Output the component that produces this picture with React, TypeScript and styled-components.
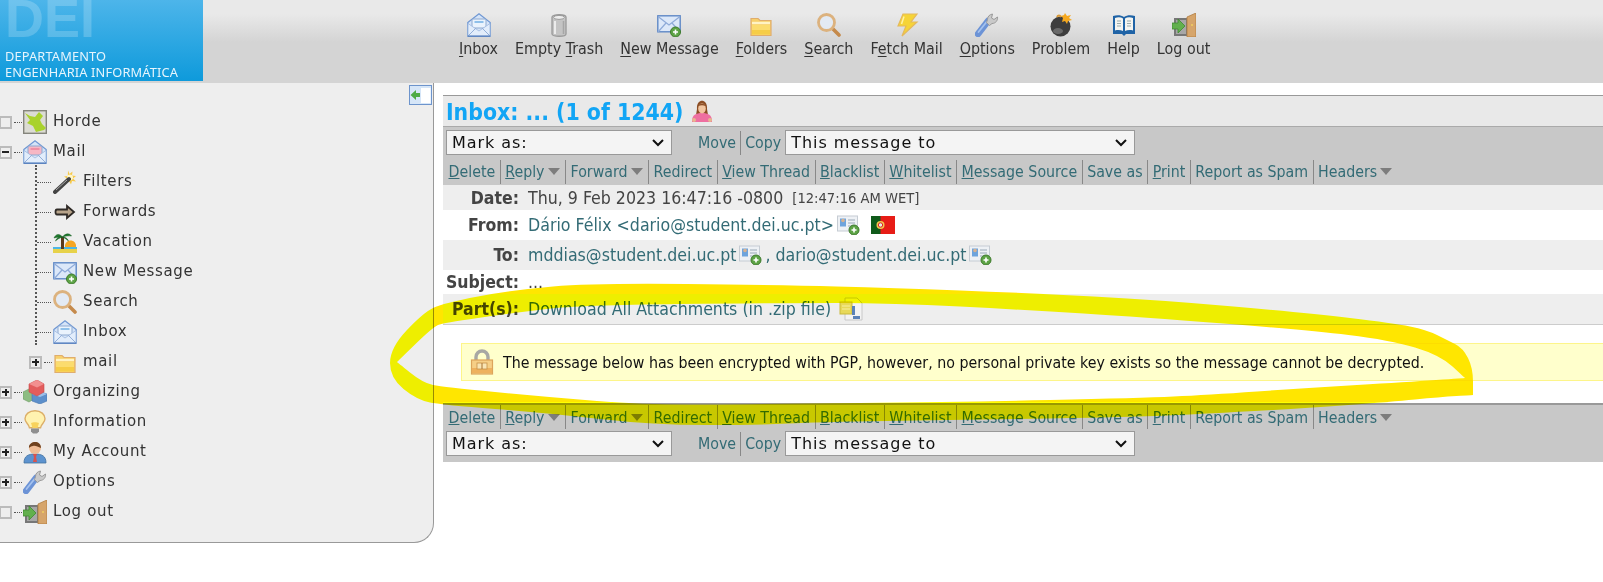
import React from "react";
import styled, { createGlobalStyle } from "styled-components";

const GlobalStyles = createGlobalStyle`
  html, body {
    margin: 0;
    padding: 0;
    background: #fff;
    overflow: hidden;
  }
  * {
    box-sizing: border-box;
  }
`;

const tahoma = `"DejaVu Sans Condensed", "DejaVu Sans", sans-serif`;
const verdana = `"DejaVu Sans", sans-serif`;

type IconProps = { size?: number };

const Svg = styled.svg`
  display: block;
  flex: none;
`;

const Plus = ({ x, y }: { x: number; y: number }) => (
  <g>
    <circle cx={x} cy={y} r="5" fill="#5da345" stroke="#3d7a2c" strokeWidth="1" />
    <path d={`M${x - 2.5} ${y}h5M${x} ${y - 2.5}v5`} stroke="#fff" strokeWidth="1.6" />
  </g>
);

const OpenMail = ({ size = 24, paper = "#eaf3fd", line = "#8fc0ea" }: IconProps & { paper?: string; line?: string }) => (
  <Svg width={size} height={size} viewBox="0 0 24 24">
    <path d="M.8 9.5 12 .8l11.2 8.7v13.7H.8z" fill="#d5e4f8" stroke="#6f97d3" strokeWidth="1.2" />
    <rect x="5" y="6" width="14" height="9" rx="1" fill={paper} stroke="#8ea9cf" />
    <path d="M7.5 9h9" stroke={line} strokeWidth="2" />
    <path d="M1 10.5 12 18l11-7.5V23H1z" fill="#e2edfb" stroke="#9db8de" strokeWidth=".8" />
    <path d="M1 23l8-8M23 23l-8-8" stroke="#93afd8" strokeWidth="1" />
    <path d="M.8 23.2h22.4" stroke="#5b83c0" strokeWidth="1.4" />
  </Svg>
);

const Trash = ({ size = 24 }: IconProps) => (
  <Svg width={size} height={size} viewBox="0 0 24 24">
    <path d="M5 4c0-3 14-3 14 0v17c0 3-14 3-14 0z" fill="#c4c4c4" stroke="#999" strokeWidth="1.3" />
    <ellipse cx="12" cy="4.4" rx="5.4" ry="2" fill="#eee" stroke="#999" />
    <path d="M8 8v13" stroke="#ececec" strokeWidth="2" />
    <path d="M16.5 8v13" stroke="#a6a6a6" strokeWidth="1.5" />
  </Svg>
);

const NewMail = ({ size = 24 }: IconProps) => (
  <Svg width={size} height={size} viewBox="0 0 24 24">
    <rect x=".8" y="2.8" width="22.4" height="16" fill="#dce8f9" stroke="#5f88c6" strokeWidth="1.4" />
    <path d="M1 3.5 12 12 23 3.5M1 19l8-9M23 19l-8-9" fill="none" stroke="#8eaad8" strokeWidth="1.2" />
    <Plus x={18.5} y={19} />
  </Svg>
);

const Folder = ({ size = 24 }: IconProps) => (
  <Svg width={size} height={size} viewBox="0 0 24 24">
    <path d="M2 5.5h7l2 2h11v15H2z" fill="#f7d06c" stroke="#e0ad6c" strokeWidth="1.2" />
    <path d="M3 10h18" stroke="#fff3c4" strokeWidth="2.4" />
    <path d="M3 12h18v9.5H3z" fill="#fbdc6e" />
    <path d="M3 17h18v4.5H3z" fill="#f6cd47" />
  </Svg>
);

const Search = ({ size = 24 }: IconProps) => (
  <Svg width={size} height={size} viewBox="0 0 24 24">
    <path d="m15 15 7 7" stroke="#c58a4c" strokeWidth="3.6" strokeLinecap="round" />
    <circle cx="9.5" cy="9.5" r="8" fill="#e3eaf3" stroke="#dcb27e" strokeWidth="2.8" />
  </Svg>
);

const Bolt = ({ size = 24 }: IconProps) => (
  <Svg width={size} height={size} viewBox="0 0 24 24">
    <path d="M8 1h14l-6 8h6L7 23l4-10H3z" fill="#f6d437" stroke="#e4b95c" strokeWidth="1.2" />
    <path d="M9 3.5 6.5 11" stroke="#fff2a8" strokeWidth="1.5" />
  </Svg>
);

const Wrench = ({ size = 24 }: IconProps) => (
  <Svg width={size} height={size} viewBox="0 0 24 24">
    <path d="m3 21 10-13" stroke="#6c93d6" strokeWidth="6.5" strokeLinecap="round" />
    <path d="m3.5 19 8-10" stroke="#a5c2ee" strokeWidth="1.8" strokeLinecap="round" />
    <path d="M12.5 6.5c0-3 2-5 5-5.5l-1 4 2.5 1.5 3.5-2.5c.5 3.5-2 6.5-5.5 6.5l-2.500 2-3-3z" fill="#c9c9c9" stroke="#999" />
  </Svg>
);

const Bomb = ({ size = 24 }: IconProps) => (
  <Svg width={size} height={size} viewBox="0 0 24 24">
    <circle cx="11.5" cy="13.5" r="10" fill="#3d3d3d" />
    <ellipse cx="9" cy="18" rx="5" ry="3" fill="#6a6a6a" />
    <path d="M8 4c1-2 3-2 4 0" fill="none" stroke="#d99a38" strokeWidth="2" />
    <path d="m16 0 2 3 4-1-2 3 3 2-4 1-1 3-2-3-3 1 1-4-2-2 3-1z" fill="#f5a81f" />
  </Svg>
);

const Book = ({ size = 24 }: IconProps) => (
  <Svg width={size} height={size} viewBox="0 0 24 24">
    <path d="M1 3c4-1 8-1 11 1 3-2 7-2 11-1v18H14l-2 2-2-2H1z" fill="#1f63a6" />
    <path d="M3 5c3-1 6-.8 8 .5V18c-2-1-5-1.2-8-.6zM21 5c-3-1-6-.8-8 .5V18c2-1 5-1.2 8-.6z" fill="#f4f4f0" />
    <path d="M5 8h4M5 10.5h4M5 13h4M15 8h4M15 10.5h4M15 13h4" stroke="#9aa" strokeWidth="1" />
  </Svg>
);

const Door = ({ size = 24 }: IconProps) => (
  <Svg width={size} height={size} viewBox="0 0 24 24">
    <path d="M2 5h14v18H2z" fill="#777" />
    <path d="M4 7h10v14H4z" fill="#a7a7a7" />
    <path d="M15 4 24 0v24h-9z" fill="#d6a56b" stroke="#b07c40" strokeWidth=".8" />
    <circle cx="20" cy="12" r="1" fill="#f0d060" />
    <path d="M0 10h6V6l7 7-7 7v-4H0z" fill="#62b04d" stroke="#3f8a30" strokeWidth=".8" />
  </Svg>
);

const Wand = ({ size = 24 }: IconProps) => (
  <Svg width={size} height={size} viewBox="0 0 24 24">
    <path d="M15 .5l1.5 3.5 3-2.5-.5 4 4 .5-3 2.5 3 3-4-.5-1 3.5-2-3.5-3.5 1 1.5-3.5-3-2 3.8-.5z" fill="#f7c948" />
    <circle cx="17" cy="7.5" r="3" fill="#fff6c8" />
    <path d="m2 22 14-13" stroke="#444" strokeWidth="4" strokeLinecap="round" />
    <path d="m3 20 11-10" stroke="#aaa" strokeWidth="1" />
  </Svg>
);

const ForwardArrow = ({ size = 24 }: IconProps) => (
  <Svg width={size} height={size} viewBox="0 0 24 24">
    <path d="M4 9.5h10V6l7 6-7 6v-3.5H4c-2 0-2-5 0-5z" fill="#b8a48b" stroke="#2f2a26" strokeWidth="1.8" />
  </Svg>
);

const Palm = ({ size = 24 }: IconProps) => (
  <Svg width={size} height={size} viewBox="0 0 24 24">
    <path d="M12 15a5.5 5.5 0 0 1 11 2H12z" fill="#f5a623" />
    <path d="M0 17h24v2H0z" fill="#4cb6e6" />
    <path d="M0 19h24v4H0z" fill="#e7d24a" />
    <path d="M8 7h3v12H8z" fill="#5a3b1e" />
    <path d="M9.5 7C6 3 3 4 1 8c3-1 5-1 8.5-1zM9.5 7c3-4 7-4 9-1-3-.5-6 0-9 1zM9.5 7c-4-.5-6 1-7 4 2-2 4-3 7-4zM9.5 7c3 0 5 1.5 6 4-2-2-4-3-6-4z" fill="#1f7a2e" stroke="#135a1e" strokeWidth=".5" />
  </Svg>
);

const HordeLogo = ({ size = 24 }: IconProps) => (
  <Svg width={size} height={size} viewBox="0 0 24 24">
    <rect x=".7" y=".7" width="22.6" height="22.6" fill="#dcdcd4" stroke="#85857c" strokeWidth="1.4" />
    <path d="M2 3l5 3 5 1 4-5 4 4-3 4 2 4 4 4-2 2-8 2-3-6-6-3 3-3z" fill="#a9d22c" />
  </Svg>
);

const Blocks = ({ size = 24 }: IconProps) => (
  <Svg width={size} height={size} viewBox="0 0 24 24">
    <path d="M0 12l6-3 5 3v7l-5 3-6-3z" fill="#8dbd82" stroke="#6d9a64" strokeWidth=".6" />
    <path d="M9 14l7-3 8 3v7l-7 3-8-3z" fill="#5c8fcb" stroke="#4a78b0" strokeWidth=".6" />
    <path d="M9 14l8 3 7-3-8-3z" fill="#9cc0e8" />
    <path d="M6 4l8-4 7 4v8l-7 4-8-4z" fill="#e25c5c" stroke="#c94a4a" strokeWidth=".6" />
    <path d="M6 4l8 3.5L21 4l-7-4z" fill="#f28f8f" />
  </Svg>
);

const Bulb = ({ size = 24 }: IconProps) => (
  <Svg width={size} height={size} viewBox="0 0 24 24">
    <path d="M12 .8c6 0 10 3.6 10 8 0 4-4 5-4.5 9h-11C6 13.8 2 12.8 2 8.800c0-4.4 4-8 10-8z" fill="#fff2b0" stroke="#dcae67" strokeWidth="1.4" />
    <path d="M8 13c2-1 6-1 8 0l-1.5 5h-5z" fill="#f8d25c" />
    <path d="M8 18.5h8v3l-2 2h-4l-2-2z" fill="#8f8f8f" />
  </Svg>
);

const Person = ({ size = 24 }: IconProps) => (
  <Svg width={size} height={size} viewBox="0 0 24 24">
    <path d="M1 23c0-7 4-9 11-9s11 2 11 9z" fill="#5d93cf" stroke="#41719f" strokeWidth=".8" />
    <path d="M10 14h4l-1 3 1 5h-4l1-5z" fill="#d9534f" />
    <circle cx="12" cy="8" r="6" fill="#f0bc95" />
    <path d="M6 8c-1-7 12-9 12 0-3-1-6-3-8-2-2 0-3 1-4 2z" fill="#70421f" />
  </Svg>
);

const Collapse = () => (
  <Svg width={23} height={20} viewBox="0 0 23 20">
    <rect x=".5" y=".5" width="22" height="19" fill="#d6e6f8" stroke="#6d94cc" />
    <rect x="12" y="3" width="9.5" height="15" fill="#fff" />
    <path d="M1.5 10 7 5v3h4v4H7v3z" fill="#4dab45" />
  </Svg>
);

const Contact = () => (
  <Svg width={23} height={20} viewBox="0 0 23 20">
    <rect x=".5" y="1" width="20" height="15" fill="#eef1f5" stroke="#c6ccd3" />
    <rect x="3" y="3.5" width="6" height="8" fill="#6fa4dc" />
    <circle cx="6" cy="5.5" r="1.8" fill="#d9b28f" />
    <path d="M11 5h7M11 8h7M11 11h5" stroke="#9aa9b8" strokeWidth="1.2" />
    <Plus x={17} y={15} />
  </Svg>
);

const FlagMark = styled(Svg)`
  margin-left: 8px;
`;

const Flag = () => (
  <FlagMark width={24} height={18} viewBox="0 0 24 18">
    <rect x="0" y="0" width="24" height="18" fill="#e71c16" />
    <rect x="0" y="0" width="9.5" height="18" fill="#0f5a1a" />
    <circle cx="9.5" cy="9" r="4" fill="#f2c94c" />
    <circle cx="9.5" cy="9" r="2.2" fill="#e8e8e8" stroke="#d22" />
  </FlagMark>
);

const ZipDoc = () => (
  <Svg width={24} height={24} viewBox="0 0 24 24">
    <path d="M6 1h12l5 5v17H6z" fill="#f3f3f3" stroke="#c8c8c8" />
    <rect x="1" y="5" width="12" height="12" fill="#e8d95a" stroke="#c9b93f" />
    <path d="M3 9h8M3 12h8" stroke="#f7f0a0" strokeWidth="1.2" />
    <path d="M13 9h3v9h-3zM14 19h7v3h-7z" fill="#5b82b8" />
  </Svg>
);

const Lock = () => (
  <Svg width={24} height={26} viewBox="0 0 24 26">
    <path d="M6 12V8a6 6 0 0 1 12 0v4" fill="none" stroke="#a8a8a4" strokeWidth="3.4" />
    <rect x="1.5" y="11" width="21" height="14" fill="#f6cf86" stroke="#dca45b" strokeWidth="1.2" />
    <path d="M2 19h20v5H2z" fill="#eeb15e" />
    <rect x="7" y="14" width="10" height="6" fill="#f9e5b4" stroke="#c69146" strokeWidth=".8" />
    <path d="M12 14v6" stroke="#a87330" />
  </Svg>
);

const Woman = () => (
  <Svg width={22} height={23} viewBox="0 0 22 23">
    <path d="M6 9c-1-11 11-11 10 0l1 6H5z" fill="#8c4e25" />
    <path d="M1 21c0-6 4-8 10-8s10 2 10 8v1H1z" fill="#ee6fa0" />
    <circle cx="3" cy="20" r="2" fill="#e8b68f" />
    <circle cx="19" cy="20" r="2" fill="#e8b68f" />
    <ellipse cx="11" cy="8.5" rx="3.8" ry="5" fill="#f2c6a0" />
    <path d="M7 6c2-3 6-3 8 0-3-1-5-1-8 0z" fill="#8c4e25" />
  </Svg>
);

const Page = styled.div`
  position: relative;
  width: 1603px;
  height: 582px;
  overflow: hidden;
  font-family: ${tahoma};
`;

const Header = styled.header`
  display: flex;
  height: 83px;
  background: linear-gradient(#e9e9e9 0, #e9e9e9 14px, #d4d4d4 42px, #d4d4d4 100%);
`;

const Logo = styled.div`
  width: 203px;
  height: 81px;
  overflow: hidden;
  padding-left: 5px;
  background: linear-gradient(#4db5ea, #0e9adb);
  color: #e6f5fd;
  font-family: "Noto Sans", sans-serif;
  flex: none;
`;

const LogoMark = styled.div`
  height: 56px;
  margin-top: -7px;
  font: bold 54px/50px "Liberation Sans", sans-serif;
  color: rgba(255, 255, 255, 0.2);
`;

const LogoLine = styled.div`
  font-size: 12.8px;
  line-height: 15.5px;
  letter-spacing: 0.15px;
  white-space: nowrap;
`;

const IconBar = styled.nav`
  display: flex;
  gap: 17px;
  margin-left: 256px;
  padding-top: 13px;
`;

const IconButton = styled.a`
  display: flex;
  flex-direction: column;
  align-items: center;
  font-size: 15.9px;
  line-height: 21px;
  color: #333;
  white-space: nowrap;
  span {
    margin-top: 1px;
  }
  u {
    text-underline-offset: 2px;
  }
`;

const Body = styled.div`
  display: flex;
  align-items: flex-start;
`;

const Sidebar = styled.aside`
  width: 434px;
  height: 460px;
  flex: none;
  overflow: hidden;
  background: #eee;
  border-right: 1px solid #999;
  border-bottom: 1px solid #999;
  border-bottom-right-radius: 20px;
  font-family: ${verdana};
  font-size: 15px;
  letter-spacing: 0.65px;
  color: #333;
`;

const SidebarTop = styled.div`
  display: flex;
  justify-content: flex-end;
  height: 22px;
  padding: 2px 1px 0 0;
`;

const TreeRow = styled.div<{ $indent?: number }>`
  display: flex;
  align-items: center;
  height: 30px;
  padding-left: ${(p) => p.$indent ?? 0}px;
  white-space: nowrap;
`;

const Expander = styled.span<{ $mark?: "plus" | "minus" }>`
  position: relative;
  display: block;
  flex: none;
  width: 13px;
  height: 13px;
  margin: 4px 0 0 -1px;
  background: #eee;
  border: 2px solid #bbb;
  &::before {
    content: "";
    display: ${(p) => (p.$mark ? "block" : "none")};
    position: absolute;
    left: 1px;
    top: 3px;
    width: 7px;
    height: 2px;
    background: #222;
  }
  &::after {
    content: "";
    display: ${(p) => (p.$mark === "plus" ? "block" : "none")};
    position: absolute;
    left: 3.5px;
    top: 1px;
    width: 2px;
    height: 7px;
    background: #222;
  }
`;

const Stem = styled.span`
  flex: none;
  width: 8px;
  margin: 4px 1px 0 2px;
  border-top: 1px dotted #555;
`;

const TreeIcon = styled.span`
  display: flex;
  flex: none;
  width: 24px;
  height: 24px;
  margin-top: 4px;
`;

const TreeLabel = styled.span`
  margin-left: 6px;
  margin-top: 1px;
`;

const Leaves = styled.div`
  margin-left: 35px;
  border-left: 2px dotted #555;
`;

const LeafStem = styled.span`
  flex: none;
  width: 14px;
  margin: 4px 2px 0 0;
  border-top: 1px dotted #555;
`;

const Main = styled.main`
  flex: 1;
  min-width: 0;
  margin-left: 9px;
  padding-top: 12px;
`;

const TitleBar = styled.div`
  display: flex;
  align-items: center;
  gap: 8px;
  height: 31px;
  padding: 1px 0 0 3px;
  background: #e9e9e9;
  border-top: 1px solid #999;
`;

const Title = styled.h1`
  margin: 0;
  font-size: 22.8px;
  line-height: 30px;
  font-weight: bold;
  color: #12a5f5;
`;

const Actions = styled.div`
  background: #c8c8c8;
`;

const SelectRow = styled.div<{ $top?: boolean }>`
  display: flex;
  align-items: center;
  height: ${(p) => (p.$top ? 32 : 33)}px;
  padding: 0 0 ${(p) => (p.$top ? 0 : 4)}px 3px;
  border-top: ${(p) => (p.$top ? "1px solid #aaa" : "0")};
`;

const chevron =
  "data:image/svg+xml,%3Csvg xmlns='http://www.w3.org/2000/svg' width='12' height='8'%3E%3Cpath d='M1 1l5 5 5-5' fill='none' stroke='%23111' stroke-width='2'/%3E%3C/svg%3E";

const Picker = styled.select<{ $width: number }>`
  appearance: none;
  width: ${(p) => p.$width}px;
  height: 25px;
  padding-left: 5px;
  font-family: ${verdana};
  font-size: 16px;
  letter-spacing: 0.95px;
  color: #111;
  background: #f4f4f4 url("${chevron}") no-repeat right 7px center;
  border: 1px solid #999;
  border-radius: 0;
`;

const SideAction = styled.a<{ $divided?: boolean; $first?: boolean }>`
  display: flex;
  align-items: center;
  height: 24px;
  margin-left: ${(p) => (p.$first ? 22 : 0)}px;
  padding: 0 4px;
  font-size: 15.8px;
  color: #336b75;
  border-left: ${(p) => (p.$divided ? "1px solid #888" : "0")};
`;

const NavRow = styled.div<{ $ruled?: boolean }>`
  display: flex;
  align-items: center;
  height: ${(p) => (p.$ruled ? 26 : 27)}px;
  padding-left: 1px;
  border-top: ${(p) => (p.$ruled ? "2px solid #999" : "0")};
`;

const NavLink = styled.a<{ $divided?: boolean }>`
  display: flex;
  align-items: center;
  height: 24px;
  padding: 0 4.5px;
  font-size: 15.8px;
  color: #336b75;
  white-space: nowrap;
  border-left: ${(p) => (p.$divided ? "1px solid #888" : "0")};
`;

const Caret = styled.span`
  width: 0;
  height: 0;
  margin: 0 1px 0 3px;
  border-style: solid;
  border-width: 7px 6.5px 0;
  border-color: #7d7d7d transparent transparent;
`;

const MetaRow = styled.div<{ $height: number; $shaded?: boolean; $ruled?: boolean }>`
  display: flex;
  align-items: center;
  height: ${(p) => p.$height}px;
  background: ${(p) => (p.$shaded ? "#eee" : "#fff")};
  border-bottom: ${(p) => (p.$ruled ? "1px solid #ccc" : "0")};
`;

const MetaLabel = styled.span`
  flex: none;
  width: 76px;
  margin-right: 9px;
  text-align: right;
  font-size: 17.5px;
  font-weight: bold;
  color: #444;
  white-space: nowrap;
  direction: rtl;
  unicode-bidi: plaintext;
`;

const MetaValue = styled.span<{ $link?: boolean }>`
  display: flex;
  align-items: center;
  gap: 3px;
  font-size: 17.6px;
  color: ${(p) => (p.$link ? "#336b75" : "#444")};
  white-space: pre;
`;

const Stamp = styled.span`
  margin-left: 1px;
  font-size: 14.6px;
`;

const Notice = styled.div`
  display: flex;
  align-items: center;
  gap: 9px;
  height: 38px;
  margin: 18px -20px 22px 18px;
  padding-left: 8px;
  background: #ffc;
  border: 1px solid #fdf58a;
  font-size: 15.8px;
  color: #111;
  white-space: nowrap;
`;

const Marker = styled.svg`
  position: absolute;
  left: 0;
  top: 0;
  pointer-events: none;
  mix-blend-mode: multiply;
`;

const toolbar: { icon: React.ReactNode; label: React.ReactNode }[] = [
  { icon: <OpenMail />, label: <><u>I</u>nbox</> },
  { icon: <Trash />, label: <>Empty <u>T</u>rash</> },
  { icon: <NewMail />, label: <><u>N</u>ew Message</> },
  { icon: <Folder />, label: <><u>F</u>olders</> },
  { icon: <Search />, label: <><u>S</u>earch</> },
  { icon: <Bolt />, label: <>F<u>e</u>tch Mail</> },
  { icon: <Wrench />, label: <><u>O</u>ptions</> },
  { icon: <Bomb />, label: <>Problem</> },
  { icon: <Book />, label: <>Help</> },
  { icon: <Door />, label: <>Log out</> },
];

const leaves: { icon: React.ReactNode; label: string }[] = [
  { icon: <Wand />, label: "Filters" },
  { icon: <ForwardArrow />, label: "Forwards" },
  { icon: <Palm />, label: "Vacation" },
  { icon: <NewMail />, label: "New Message" },
  { icon: <Search />, label: "Search" },
  { icon: <OpenMail />, label: "Inbox" },
];

const lowerTree: { icon: React.ReactNode; label: string; mark?: "plus" }[] = [
  { icon: <Blocks />, label: "Organizing", mark: "plus" },
  { icon: <Bulb />, label: "Information", mark: "plus" },
  { icon: <Person />, label: "My Account", mark: "plus" },
  { icon: <Wrench />, label: "Options", mark: "plus" },
  { icon: <Door />, label: "Log out" },
];

const messageLinks: { label: React.ReactNode; caret?: boolean }[] = [
  { label: <><u>D</u>elete</> },
  { label: <><u>R</u>eply</>, caret: true },
  { label: <>Forward</>, caret: true },
  { label: <>Redirect</> },
  { label: <><u>V</u>iew Thread</> },
  { label: <><u>B</u>lacklist</> },
  { label: <><u>W</u>hitelist</> },
  { label: <><u>M</u>essage Source</> },
  { label: <>Save as</> },
  { label: <><u>P</u>rint</> },
  { label: <>Report as Spam</> },
  { label: <>Headers</>, caret: true },
];

type Pt = [number, number];

// outer edge of the hand drawn ring (tips listed twice to stay sharp)
const ringOuter: Pt[] = [
  [593, 283], [780, 285], [893, 288], [1027, 293], [1160, 300], [1307, 313], [1393, 323], [1427, 330],
  [1447, 340], [1463, 348], [1473, 368], [1473, 395], [1473, 395], [1440, 397], [1390, 402], [1307, 408],
  [1240, 412], [1140, 417], [957, 420], [817, 422], [760, 425], [653, 425], [547, 413], [443, 405],
  [417, 400], [390, 378], [390, 348], [423, 313], [443, 303], [513, 290],
];
const ringInner: Pt[] = [
  [580, 305], [780, 303], [893, 303], [1027, 310], [1140, 317], [1307, 330], [1390, 340], [1440, 355],
  [1465, 378], [1465, 378], [1407, 382], [1307, 388], [1207, 395], [1140, 398], [960, 402], [760, 404],
  [647, 405], [547, 397], [443, 387], [423, 383], [397, 362], [397, 362], [433, 327], [443, 323], [513, 313],
];

// closed curve running through the midpoints of the outline
const smooth = (pts: Pt[]) => {
  const mid = (a: Pt, b: Pt) => `${(a[0] + b[0]) / 2} ${(a[1] + b[1]) / 2}`;
  let d = `M${mid(pts[pts.length - 1], pts[0])}`;
  pts.forEach((p, i) => {
    d += `Q${p[0]} ${p[1]} ${mid(p, pts[(i + 1) % pts.length])}`;
  });
  return d + "Z";
};

const ringPath = `${smooth(ringOuter)} ${smooth(ringInner)}`;

function ActionStrip() {
  return (
    <>
      {messageLinks.map((item, i) => (
        <NavLink key={i} $divided={i > 0}>
          <span>{item.label}</span>
          {item.caret && <Caret />}
        </NavLink>
      ))}
    </>
  );
}

const MovePickers = () => (
  <>
    <Picker $width={226} defaultValue="mark">
      <option value="mark">Mark as:</option>
    </Picker>
    <SideAction $first>Move</SideAction>
    <SideAction $divided>Copy</SideAction>
    <Picker $width={350} defaultValue="to">
      <option value="to">This message to</option>
    </Picker>
  </>
);

export default function App() {
  return (
    <Page>
      <GlobalStyles />
      <Header>
        <Logo>
          <LogoMark>DEI</LogoMark>
          <LogoLine>DEPARTAMENTO</LogoLine>
          <LogoLine>ENGENHARIA INFORMÁTICA</LogoLine>
        </Logo>
        <IconBar>
          {toolbar.map((item, i) => (
            <IconButton key={i}>
              {item.icon}
              <span>{item.label}</span>
            </IconButton>
          ))}
        </IconBar>
      </Header>
      <Body>
        <Sidebar>
          <SidebarTop>
            <Collapse />
          </SidebarTop>
          <TreeRow>
            <Expander />
            <Stem />
            <TreeIcon><HordeLogo /></TreeIcon>
            <TreeLabel>Horde</TreeLabel>
          </TreeRow>
          <TreeRow>
            <Expander $mark="minus" />
            <Stem />
            <TreeIcon><OpenMail paper="#f6b7c4" line="#ee8fa5" /></TreeIcon>
            <TreeLabel>Mail</TreeLabel>
          </TreeRow>
          <Leaves>
            {leaves.map((leaf) => (
              <TreeRow key={leaf.label}>
                <LeafStem />
                <TreeIcon>{leaf.icon}</TreeIcon>
                <TreeLabel>{leaf.label}</TreeLabel>
              </TreeRow>
            ))}
          </Leaves>
          <TreeRow $indent={30}>
            <Expander $mark="plus" />
            <Stem />
            <TreeIcon><Folder /></TreeIcon>
            <TreeLabel>mail</TreeLabel>
          </TreeRow>
          {lowerTree.map((node) => (
            <TreeRow key={node.label}>
              <Expander $mark={node.mark} />
              <Stem />
              <TreeIcon>{node.icon}</TreeIcon>
              <TreeLabel>{node.label}</TreeLabel>
            </TreeRow>
          ))}
        </Sidebar>
        <Main>
          <TitleBar>
            <Title>Inbox: ... (1 of 1244)</Title>
            <Woman />
          </TitleBar>
          <Actions>
            <SelectRow $top><MovePickers /></SelectRow>
            <NavRow><ActionStrip /></NavRow>
          </Actions>
          <MetaRow $height={25} $shaded>
            <MetaLabel>Date:</MetaLabel>
            <MetaValue>Thu, 9 Feb 2023 16:47:16 -0800 <Stamp>[12:47:16 AM WET]</Stamp></MetaValue>
          </MetaRow>
          <MetaRow $height={30}>
            <MetaLabel>From:</MetaLabel>
            <MetaValue $link>Dário Félix &lt;dario@student.dei.uc.pt&gt;<Contact /><Flag /></MetaValue>
          </MetaRow>
          <MetaRow $height={30} $shaded>
            <MetaLabel>To:</MetaLabel>
            <MetaValue $link>mddias@student.dei.uc.pt<Contact />, dario@student.dei.uc.pt<Contact /></MetaValue>
          </MetaRow>
          <MetaRow $height={24}>
            <MetaLabel>Subject:</MetaLabel>
            <MetaValue>...</MetaValue>
          </MetaRow>
          <MetaRow $height={31} $shaded $ruled>
            <MetaLabel>Part(s):</MetaLabel>
            <MetaValue $link>Download All Attachments (in .zip file) <ZipDoc /></MetaValue>
          </MetaRow>
          <Notice>
            <Lock />
            The message below has been encrypted with PGP, however, no personal private key exists so the message cannot be decrypted.
          </Notice>
          <Actions>
            <NavRow $ruled><ActionStrip /></NavRow>
            <SelectRow><MovePickers /></SelectRow>
          </Actions>
        </Main>
      </Body>
      <Marker width="1603" height="582" viewBox="0 0 1603 582">
        <defs>
          <clipPath id="overShaded">
            <rect x="0" y="0" width="433" height="582" />
            <rect x="443" y="294" width="1160" height="31" />
            <rect x="443" y="402" width="1160" height="60" />
          </clipPath>
          <clipPath id="overWhite">
            <rect x="433" y="0" width="10" height="582" />
            <rect x="443" y="0" width="1160" height="294" />
            <rect x="443" y="325" width="1160" height="77" />
          </clipPath>
        </defs>
        <path d={ringPath} fill="#ffff00" fillRule="evenodd" clipPath="url(#overShaded)" />
        <path d={ringPath} fill="#ffe600" fillRule="evenodd" clipPath="url(#overWhite)" />
      </Marker>
    </Page>
  );
}
